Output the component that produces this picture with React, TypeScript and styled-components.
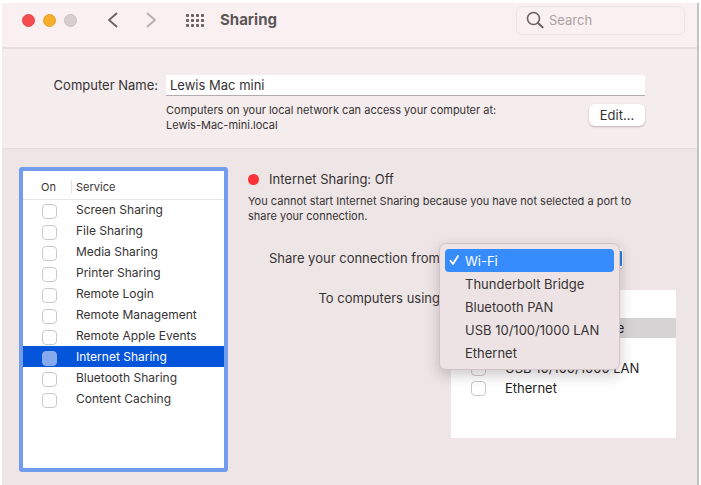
import React, { useState } from "react";
import styled, { createGlobalStyle, css } from "styled-components";

const GlobalStyle = createGlobalStyle`
  * { box-sizing: border-box; }
  body { margin: 0; background: #fff; }
  body, input, button, select { font-family: Inter, "Liberation Sans", sans-serif; }
`;

const Window = styled.div`
  margin: 3px 2px 0;
  min-height: calc(100vh - 3px);
  display: flex;
  flex-direction: column;
  background: #eee5e6;
  border-right: 2px solid #c6c3c4;
  color: #363334;
  font-size: 13px;
  line-height: 18px;
`;

const TitleBar = styled.header`
  display: flex;
  align-items: center;
  height: 46px;
  padding: 0 12px 10px 20px;
  background: #faf0f1;
  border-bottom: 2px solid #e7dddf;
`;

const Lights = styled.div`
  display: flex;
  gap: 8px;
`;

const Light = styled.button<{ $fill: string; $edge: string }>`
  width: 13px;
  height: 13px;
  padding: 0;
  border: 1px solid ${(p) => p.$edge};
  border-radius: 50%;
  background: ${(p) => p.$fill};
`;

const NavButtons = styled.div`
  display: flex;
  gap: 26px;
  margin: 0 28px 0 30px;
`;

const IconButton = styled.button`
  display: flex;
  padding: 0;
  border: 0;
  background: none;
`;

const Title = styled.h1`
  flex: 1;
  margin: 0 0 0 15px;
  color: #5b5657;
  font-size: 15px;
  font-weight: 700;
  line-height: 20px;
`;

const SearchBox = styled.label`
  display: flex;
  align-items: center;
  gap: 5px;
  flex: 0 1 169px;
  min-width: 0;
  height: 29px;
  padding: 0 9px;
  border: 1px solid #eee4e6;
  border-radius: 6px;

  svg { flex: none; }
`;

const SearchInput = styled.input`
  width: 100%;
  min-width: 0;
  padding: 0;
  border: 0;
  outline: 0;
  background: none;
  font-size: 13px;
  &::placeholder { color: #aaa1a3; opacity: 1; }
`;

const NamePanel = styled.section`
  display: grid;
  grid-template-columns: 156px 1fr;
  column-gap: 8px;
  row-gap: 7px;
  padding: 26px 52px 14px 0;
  background: #f5eced;
  border-bottom: 1px solid #e6dddf;
`;

const NameLabel = styled.label`
  text-align: right;
  line-height: 20px;
`;

const NameInput = styled.input`
  width: 100%;
  height: 21px;
  padding: 0 4px;
  border: 0;
  border-bottom: 1px solid #b3abad;
  border-radius: 0;
  outline: 0;
  background: #fff;
  color: #363334;
  font-size: 13px;
`;

const NameDetails = styled.div`
  grid-column: 2;
  display: flex;
  justify-content: space-between;
  align-items: flex-start;
  min-height: 31px;
`;

const Hint = styled.p`
  margin: 0;
  font-size: 11px;
  line-height: 15px;
`;

const EditButton = styled.button`
  width: 56px;
  height: 22px;
  margin-top: 1px;
  padding: 0;
  border: 0;
  border-radius: 6px;
  background: #fff;
  box-shadow: 0 1px 2px #b9b0b2;
  color: #363334;
  font-size: 13px;
`;

const Body = styled.main`
  flex: 1;
  display: grid;
  grid-template-columns: 209px 1fr;
  gap: 20px;
  padding: 18px 21px 13px 17px;
`;

const ServicePane = styled.div`
  border: 4px solid #729cee;
  border-radius: 3px;
  background: #fff;
`;

const ServiceTable = styled.table`
  width: 100%;
  border-collapse: collapse;
  table-layout: fixed;
`;

const HeadCell = styled.th<{ $narrow?: boolean }>`
  width: ${(p) => (p.$narrow ? "49px" : "auto")};
  height: 28px;
  padding: ${(p) => (p.$narrow ? "4px 0 0 18px" : "4px 0 0 4px")};
  border-bottom: 1px solid #e8e6e6;
  font-size: 11px;
  font-weight: 400;
  text-align: left;
`;

const HeadText = styled.span<{ $divided?: boolean }>`
  ${(p) => p.$divided && css`
    box-shadow: -4px 0 0 #fff, -5px 0 0 #e4e2e2;
  `}
`;

const ServiceRow = styled.tr<{ $selected: boolean }>`
  height: 21px;
  background: ${(p) => (p.$selected ? "#0455da" : "transparent")};
  color: ${(p) => (p.$selected ? "#fff" : "inherit")};
`;

const ServiceCell = styled.td`
  padding: 0 0 0 4px;
  font-size: 12px;
  line-height: 18px;
`;

const CheckCell = styled.td`
  padding: 3px 0 0 19px;
  line-height: 0;
`;

const Check = styled.input<{ $selected?: boolean }>`
  appearance: none;
  flex: none;
  width: 15px;
  height: 15px;
  margin: 0;
  border: 1px solid ${(p) => (p.$selected ? "#8aaceb" : "#cbc8c8")};
  border-radius: 4px;
  background: ${(p) => (p.$selected ? "#85a9ed" : "#fff")};
  &:checked { background: #2f7cf0; }
`;

const Details = styled.section`
  min-width: 0;
`;

const Status = styled.h2`
  display: flex;
  align-items: center;
  gap: 10px;
  margin: 3px 0 6px;
  font-size: 13px;
  font-weight: 400;
  line-height: 18px;
`;

const StatusDot = styled.span`
  width: 11px;
  height: 11px;
  border-radius: 50%;
  background: #fb3237;
`;

const StatusHint = styled(Hint)`
  padding-right: 20px;
`;

const Form = styled.div`
  display: grid;
  grid-template-columns: 192px 1fr;
  column-gap: 11px;
  row-gap: 21px;
  padding-top: 24px;
`;

const FieldLabel = styled.label`
  justify-self: end;
  white-space: nowrap;
  line-height: 20px;
`;

const PortsLabel = styled.span`
  justify-self: end;
  line-height: 16px;
`;

const PopUp = styled.div`
  position: relative;
  width: 172px;
  height: 21px;
`;

const PortSelect = styled.select`
  appearance: none;
  display: block;
  width: 100%;
  height: 21px;
  padding: 0 8px;
  border: 0;
  border-right: 1px solid #fff;
  border-radius: 5px;
  background: #fff linear-gradient(#2478ee, #2478ee) right center / 17px 15px no-repeat;
  box-shadow: 0 1px 2px #bdb5b7;
  font-size: 13px;
`;

const Menu = styled.div`
  position: absolute;
  z-index: 1;
  top: -5px;
  left: -12px;
  width: 181px;
  padding: 5px;
  border: 1px solid #cfc5c7;
  border-radius: 7px;
  background: #ede3e4;
  box-shadow: 0 5px 14px rgba(60, 40, 45, 0.25);
`;

const MenuItem = styled.button<{ $active: boolean }>`
  display: grid;
  grid-template-columns: 16px 1fr;
  align-items: center;
  width: 100%;
  height: 23px;
  padding: 0 4px;
  border: 0;
  border-radius: 4px;
  background: ${(p) => (p.$active ? "#378cfd" : "none")};
  color: ${(p) => (p.$active ? "#fff" : "#363334")};
  font-size: 13px;
  text-align: left;
  white-space: nowrap;
`;

const PortList = styled.div`
  min-height: 148px;
  padding-top: 28px;
  background: #fff;
  color: #1f1d1e;
`;

const PortRow = styled.label<{ $selected: boolean }>`
  display: flex;
  align-items: center;
  gap: 19px;
  height: 20px;
  padding-left: 20px;
  background: ${(p) => (p.$selected ? "#d5d3d3" : "transparent")};
  white-space: nowrap;
`;

const services = [
  "Screen Sharing",
  "File Sharing",
  "Media Sharing",
  "Printer Sharing",
  "Remote Login",
  "Remote Management",
  "Remote Apple Events",
  "Internet Sharing",
  "Bluetooth Sharing",
  "Content Caching",
];

const sources = ["Wi-Fi", "Thunderbolt Bridge", "Bluetooth PAN", "USB 10/100/1000 LAN", "Ethernet"];

const Chevron = ({ back }: { back?: boolean }) => (
  <svg width="12" height="18" viewBox="0 0 12 18" fill="none" stroke={back ? "#686263" : "#b5acae"} strokeWidth="1.8" strokeLinecap="round" strokeLinejoin="round">
    <path d={back ? "M9.5 2.5 2 9l7.5 6.5" : "M2.5 2.5 10 9l-7.5 6.5"} />
  </svg>
);

const GridIcon = () => (
  <svg width="20" height="15" viewBox="0 0 20 15" fill="#655f60">
    {[0, 5, 10, 15].map((x) =>
      [0, 5, 10].map((y) => <rect key={`${x}-${y}`} x={x + 1} y={y + 1} width="3" height="3" rx="1" />)
    )}
  </svg>
);

const SearchIcon = () => (
  <svg width="18" height="18" viewBox="0 0 18 18" fill="none" stroke="#686263" strokeWidth="1.6" strokeLinecap="round">
    <circle cx="7.5" cy="7.5" r="6" />
    <path d="m12 12 4.6 4.3" strokeWidth="2" />
  </svg>
);

const Tick = () => (
  <svg width="11" height="12" viewBox="0 0 11 12" fill="none" stroke="#fff" strokeWidth="1.8" strokeLinecap="round" strokeLinejoin="round">
    <path d="M1.5 6.8 4 10l5-8" />
  </svg>
);

export default function App() {
  const [source, setSource] = useState("Wi-Fi");
  const [open, setOpen] = useState(true);

  return (
    <>
      <GlobalStyle />
      <Window>
        <TitleBar>
          <Lights>
            <Light aria-label="Close" $fill="#f64c4d" $edge="#e84446" />
            <Light aria-label="Minimize" $fill="#f6ae2c" $edge="#e5a02a" />
            <Light aria-label="Zoom" $fill="#d7ced0" $edge="#c9c0c2" />
          </Lights>
          <NavButtons>
            <IconButton aria-label="Back"><Chevron back /></IconButton>
            <IconButton aria-label="Forward"><Chevron /></IconButton>
          </NavButtons>
          <IconButton aria-label="Show all"><GridIcon /></IconButton>
          <Title>Sharing</Title>
          <SearchBox>
            <SearchIcon />
            <SearchInput type="search" placeholder="Search" aria-label="Search" />
          </SearchBox>
        </TitleBar>

        <NamePanel>
          <NameLabel htmlFor="computer-name">Computer Name:</NameLabel>
          <NameInput id="computer-name" defaultValue="Lewis Mac mini" />
          <NameDetails>
            <Hint>
              Computers on your local network can access your computer at:
              <br />
              Lewis-Mac-mini.local
            </Hint>
            <EditButton>Edit...</EditButton>
          </NameDetails>
        </NamePanel>

        <Body>
          <ServicePane>
            <ServiceTable>
              <thead>
                <tr>
                  <HeadCell $narrow><HeadText>On</HeadText></HeadCell>
                  <HeadCell><HeadText $divided>Service</HeadText></HeadCell>
                </tr>
              </thead>
              <tbody>
                {services.map((name, i) => {
                  const selected = name === "Internet Sharing";
                  return (
                    <ServiceRow key={name} $selected={selected}>
                      <CheckCell><Check type="checkbox" id={`service-${i}`} $selected={selected} /></CheckCell>
                      <ServiceCell><label htmlFor={`service-${i}`}>{name}</label></ServiceCell>
                    </ServiceRow>
                  );
                })}
              </tbody>
            </ServiceTable>
          </ServicePane>

          <Details>
            <Status><StatusDot />Internet Sharing: Off</Status>
            <StatusHint>
              You cannot start Internet Sharing because you have not selected a port to share your connection.
            </StatusHint>
            <Form>
              <FieldLabel htmlFor="source">Share your connection from</FieldLabel>
              <PopUp>
                <PortSelect id="source" value={source} onChange={(e) => setSource(e.target.value)}>
                  {sources.map((s) => <option key={s}>{s}</option>)}
                </PortSelect>
                {open && (
                  <Menu role="listbox" aria-label="Share your connection from">
                    {sources.map((s) => (
                      <MenuItem
                        key={s}
                        role="option"
                        aria-selected={s === source}
                        $active={s === source}
                        onClick={() => { setSource(s); setOpen(false); }}
                      >
                        <span>{s === source && <Tick />}</span>
                        {s}
                      </MenuItem>
                    ))}
                  </Menu>
                )}
              </PopUp>
              <PortsLabel>To computers using</PortsLabel>
              <PortList>
                {sources.slice(1).map((s) => (
                  <PortRow key={s} $selected={s === "Thunderbolt Bridge"}>
                    <Check type="checkbox" />
                    {s}
                  </PortRow>
                ))}
              </PortList>
            </Form>
          </Details>
        </Body>
      </Window>
    </>
  );
}
